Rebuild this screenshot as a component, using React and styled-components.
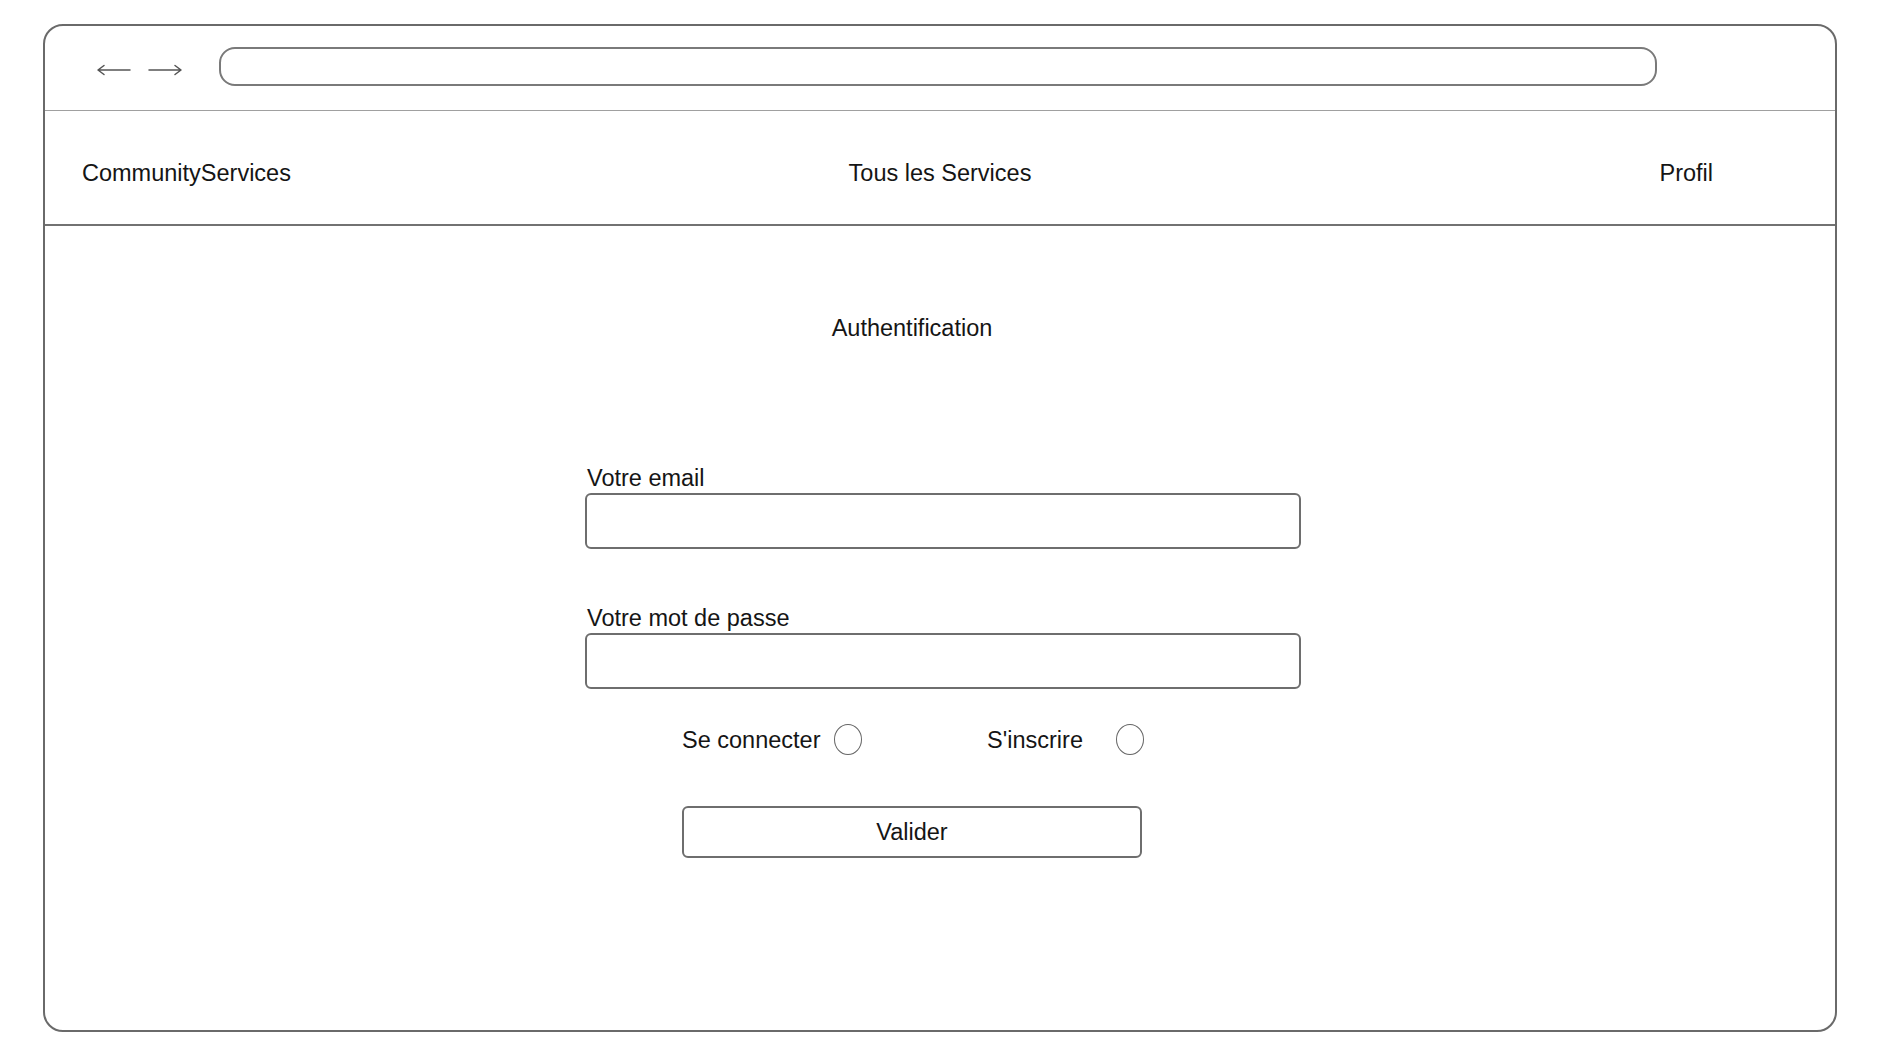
import React from "react";
import styled, { createGlobalStyle } from "styled-components";

const GlobalStyle = createGlobalStyle`
  html, body {
    margin: 0;
    padding: 0;
    background: #ffffff;
  }
  body {
    font-family: "Liberation Sans", Arial, sans-serif;
    color: #151515;
  }
`;

const Page = styled.div`
  width: 1886px;
  height: 1058px;
  padding: 24px 0 0 43px;
  box-sizing: border-box;
`;

const Frame = styled.div`
  width: 1794px;
  height: 1008px;
  box-sizing: border-box;
  border: 2px solid #6a6a6a;
  border-radius: 20px;
  display: flex;
  flex-direction: column;
  overflow: hidden;
`;

const Toolbar = styled.div`
  height: 85px;
  display: flex;
  align-items: center;
  padding: 0 0 4px 51px;
  box-sizing: border-box;
  border-bottom: 1.5px solid #a0a0a0;
`;

const Arrows = styled.div`
  display: flex;
  gap: 15px;
  margin-top: 7px;
`;

const UrlBar = styled.div`
  width: 1438px;
  height: 39px;
  box-sizing: border-box;
  margin-left: 36px;
  border: 2px solid #7a7a7a;
  border-radius: 16px;
`;

const Nav = styled.nav`
  height: 115px;
  box-sizing: border-box;
  padding: 11px 37px 0;
  display: grid;
  grid-template-columns: 1fr auto 1fr;
  align-items: center;
  border-bottom: 2px solid #727272;
`;

const NavLink = styled.div`
  font-size: 23.5px;
  line-height: 26px;
  justify-self: ${({ $align }) => $align || "start"};
  margin-right: ${({ $offset }) => $offset || 0}px;
`;

const Main = styled.main`
  flex: 1;
  padding: 89px 0 0 540px;
  display: flex;
  flex-direction: column;
`;

const Title = styled.h1`
  margin: 0 0 124px 97px;
  width: 460px;
  font-size: 23.5px;
  font-weight: 400;
  line-height: 26px;
  text-align: center;
`;

const Field = styled.div`
  width: 716px;
  display: flex;
  flex-direction: column;
  margin-bottom: ${({ $gap }) => $gap}px;
`;

const Label = styled.label`
  font-size: 23.5px;
  line-height: 26px;
  margin: 0 0 2px 2px;
`;

const Input = styled.div`
  height: 56px;
  box-sizing: border-box;
  border: 2px solid #6e6e6e;
  border-radius: 6px;
`;

const ChoiceRow = styled.div`
  width: 462px;
  margin-left: 97px;
  height: 31px;
  display: flex;
  align-items: center;
  justify-content: space-between;
  margin-bottom: 51px;
`;

const Choice = styled.div`
  display: flex;
  align-items: center;
  gap: ${({ $gap }) => $gap}px;
  font-size: 23.5px;
  line-height: 26px;
`;

const Radio = styled.span`
  display: inline-block;
  width: 28px;
  height: 31px;
  box-sizing: border-box;
  border: 1.5px solid #666666;
  border-radius: 50%;
`;

const Button = styled.button`
  width: 460px;
  height: 52px;
  margin-left: 97px;
  box-sizing: border-box;
  border: 2px solid #6e6e6e;
  border-radius: 6px;
  background: #ffffff;
  font-family: "Liberation Sans", Arial, sans-serif;
  font-size: 23.5px;
  color: #151515;
  padding: 0;
`;

const Arrow = ({ dir }) => (
  <svg width="36" height="12" viewBox="0 0 36 12" fill="none" stroke="#555" strokeWidth="1.5" strokeLinecap="round" strokeLinejoin="round">
    {dir === "left" ? (
      <path d="M2 6 H34 M8 1.5 L2 6 L8 10.5" />
    ) : (
      <path d="M2 6 H34 M28 1.5 L34 6 L28 10.5" />
    )}
  </svg>
);

export default function App() {
  return (
    <>
      <GlobalStyle />
      <Page>
        <Frame>
          <Toolbar>
            <Arrows>
              <Arrow dir="left" />
              <Arrow dir="right" />
            </Arrows>
            <UrlBar />
          </Toolbar>
          <Nav>
            <NavLink>CommunityServices</NavLink>
            <NavLink $align="center">Tous les Services</NavLink>
            <NavLink $align="end" $offset={85}>Profil</NavLink>
          </Nav>
          <Main>
            <Title>Authentification</Title>
            <Field $gap={56}>
              <Label>Votre email</Label>
              <Input />
            </Field>
            <Field $gap={35}>
              <Label>Votre mot de passe</Label>
              <Input />
            </Field>
            <ChoiceRow>
              <Choice $gap={14}>
                Se connecter <Radio />
              </Choice>
              <Choice $gap={33}>
                S'inscrire <Radio />
              </Choice>
            </ChoiceRow>
            <Button>Valider</Button>
          </Main>
        </Frame>
      </Page>
    </>
  );
}
